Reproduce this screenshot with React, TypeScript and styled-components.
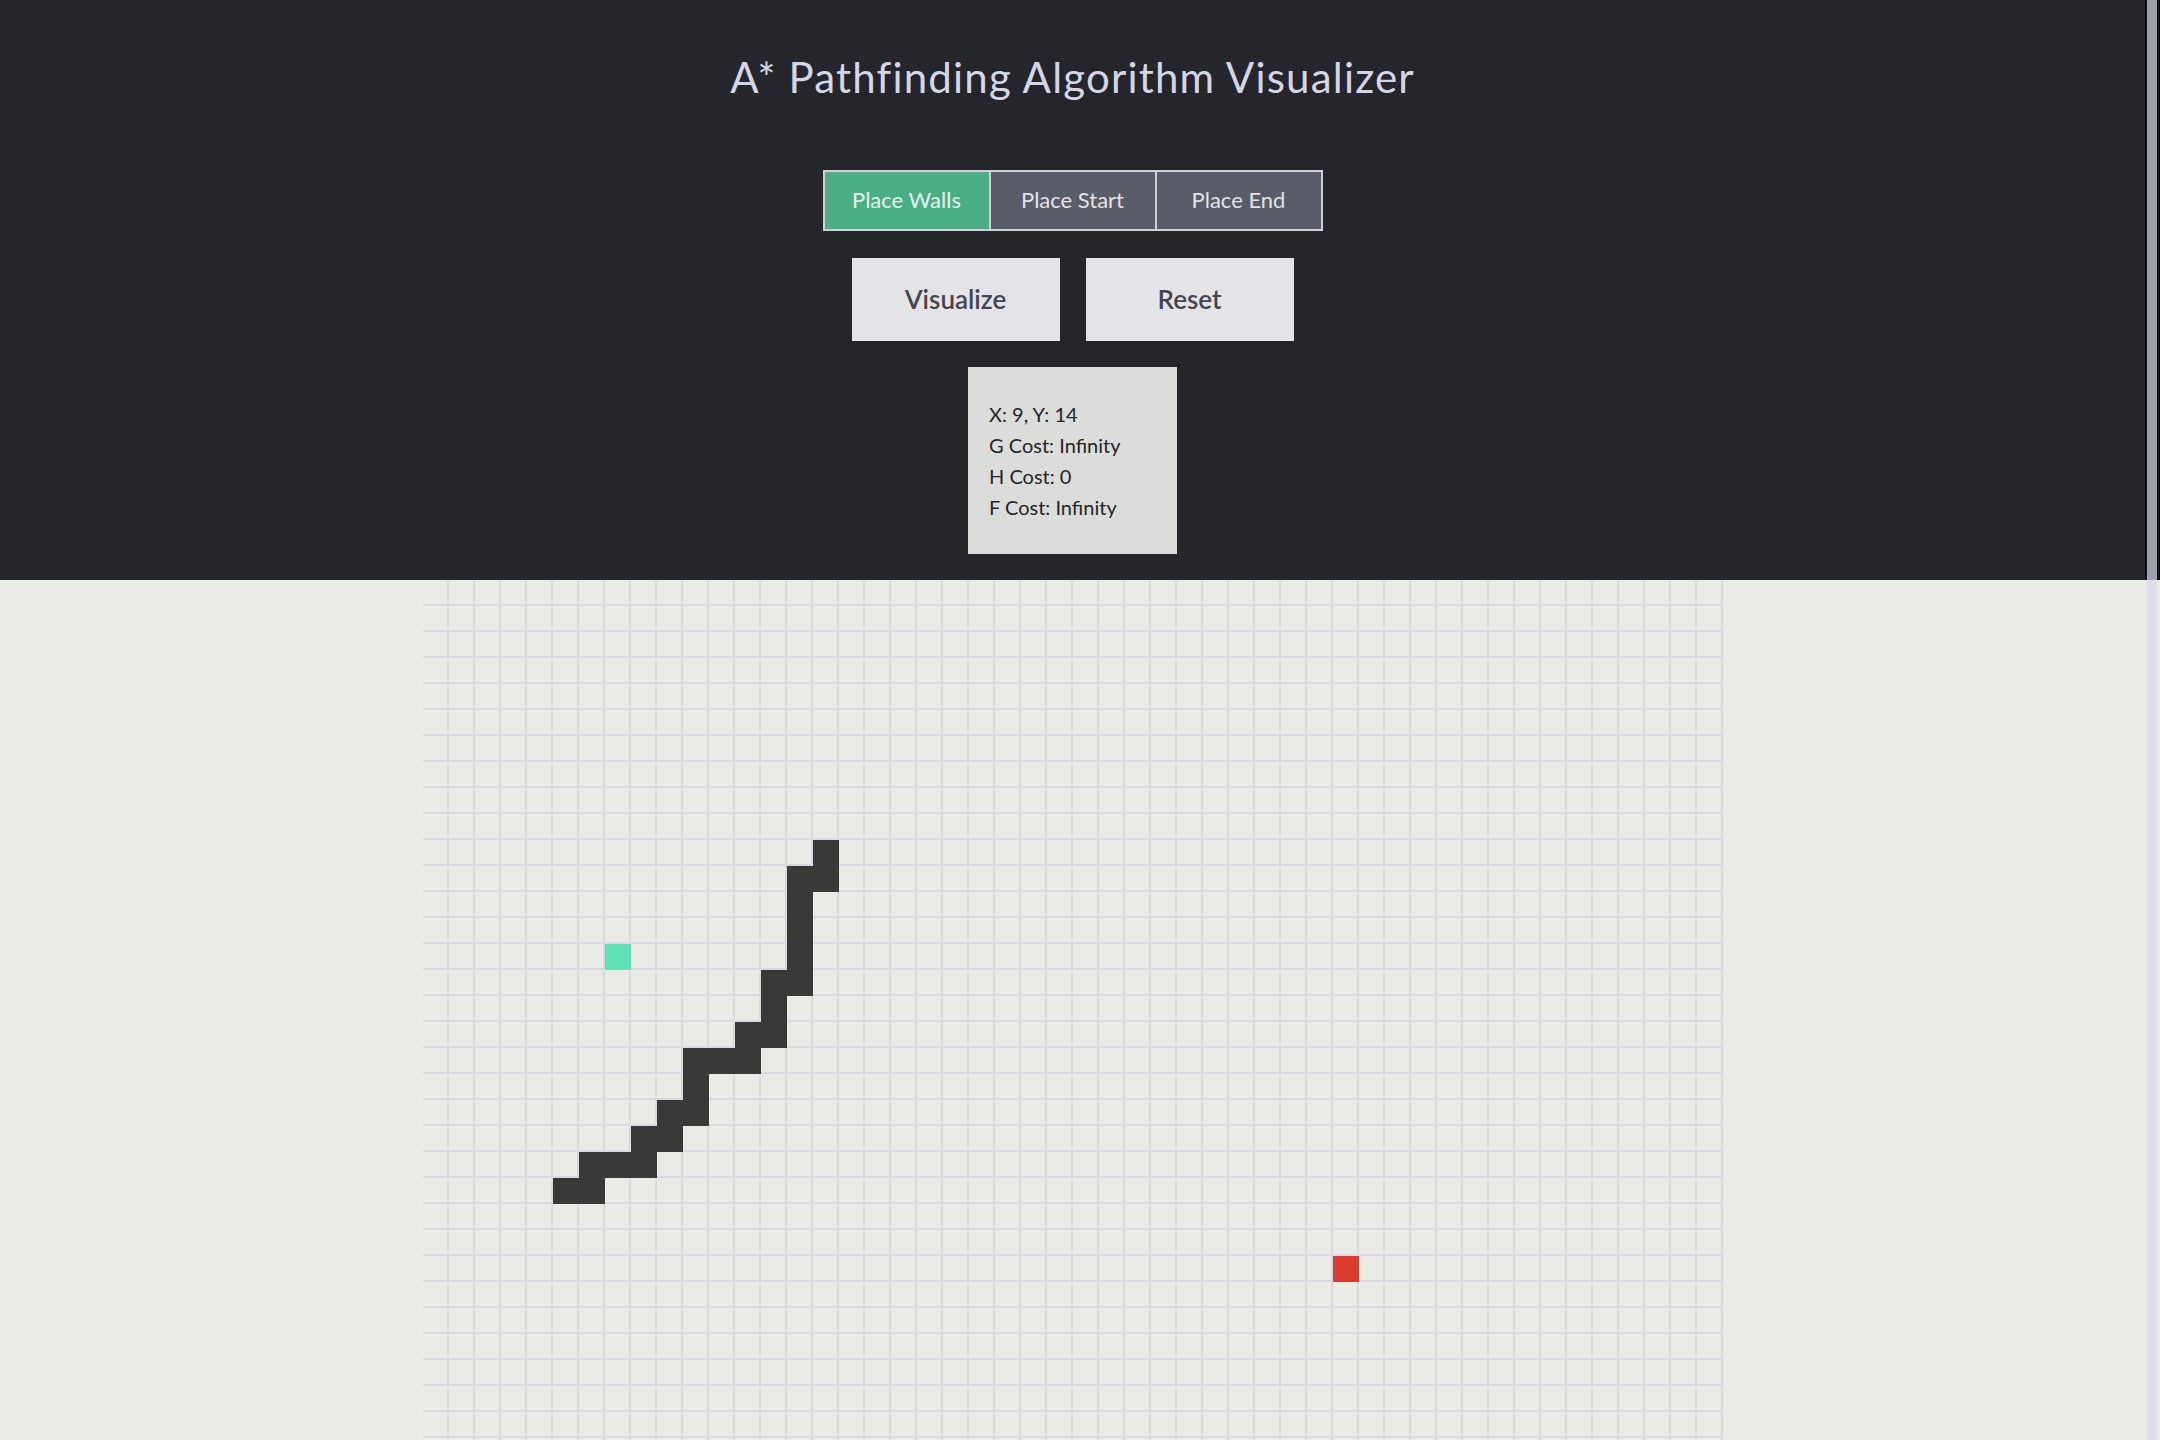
import React from "react";
import styled, { createGlobalStyle } from "styled-components";

const COLS = 50;
const ROWS = 34;
const CELL = 26;
const HEADER_H = 580;

const GlobalStyle = createGlobalStyle`
  html, body {
    margin: 0;
    background: #ebebe6;
    font-family: Lato, "Noto Sans", sans-serif;
  }
`;

const Page = styled.div`
  display: flex;
  align-items: flex-start;
  min-height: 100vh;
`;

const Content = styled.div`
  flex: 1;
  min-width: 0;
  display: flex;
  flex-direction: column;
`;

const ScrollTrack = styled.div`
  position: sticky;
  top: 0;
  flex: 0 0 15px;
  height: 100vh;
  display: flex;
  justify-content: flex-start;
  padding-left: 2px;
  box-sizing: border-box;
  background: linear-gradient(
    to bottom,
    #0d0e10 0,
    #0d0e10 ${HEADER_H}px,
    #ebebe6 ${HEADER_H}px,
    #ebebe6 100%
  );
`;

const ScrollThumb = styled.div`
  width: 10px;
  height: 100%;
  background: linear-gradient(
    to bottom,
    #9da1ae 0,
    #9da1ae ${HEADER_H}px,
    #dfe0e7 ${HEADER_H}px,
    #dfe0e7 100%
  );
`;

const Header = styled.header`
  background: #24262c;
  display: flex;
  flex-direction: column;
  align-items: center;
  padding: 52px 0 26px;
`;

const Title = styled.h1`
  margin: 0;
  font-family: Lato, "Noto Sans", sans-serif;
  font-weight: 400;
  font-size: 42px;
  line-height: 50px;
  letter-spacing: 1.2px;
  color: #d5d7e6;
`;

const ModeGroup = styled.div`
  display: flex;
  margin-top: 68px;
`;

const ModeButton = styled.button<{ $active?: boolean }>`
  width: 168px;
  height: 61px;
  box-sizing: border-box;
  border: 2px solid #cfd0d2;
  margin: 0;
  padding: 0 0 2px;
  background: ${(p) => (p.$active ? "#4aaf84" : "#595d67")};
  color: ${(p) => (p.$active ? "#e6f4ee" : "#e2e3e8")};
  font-family: Lato, "Noto Sans", sans-serif;
  font-size: 22px;
  font-weight: 400;
  cursor: pointer;
  & + & {
    margin-left: -2px;
  }
`;

const ActionRow = styled.div`
  display: flex;
  gap: 26px;
  margin-top: 27px;
`;

const ActionButton = styled.button`
  width: 208px;
  height: 83px;
  border: none;
  margin: 0;
  padding: 0 0 2px;
  background: #e4e4e8;
  color: #45454d;
  font-family: Lato, "Noto Sans", sans-serif;
  font-size: 26px;
  font-weight: 600;
  cursor: pointer;
`;

const InfoBox = styled.div`
  margin-top: 26px;
  width: 209px;
  height: 187px;
  box-sizing: border-box;
  background: #dcdcda;
  padding: 32px 20px 0 21px;
  display: flex;
  flex-direction: column;
`;

const InfoLine = styled.div`
  font-family: Lato, "Noto Sans", sans-serif;
  font-size: 20px;
  line-height: 31px;
  color: #25252a;
  white-space: nowrap;
`;

const Board = styled.main`
  display: flex;
  justify-content: center;
  background: #ebebe6;
`;

const Grid = styled.div`
  display: grid;
  grid-template-columns: repeat(${COLS}, ${CELL}px);
  grid-auto-rows: ${CELL}px;
`;

type Kind = "empty" | "wall" | "start" | "end";

const kindColor: Record<Kind, string> = {
  empty: "transparent",
  wall: "#393937",
  start: "#5fe3b6",
  end: "#d93b30",
};

const Cell = styled.div<{ $kind: Kind }>`
  box-sizing: border-box;
  width: ${CELL}px;
  height: ${CELL}px;
  background: ${(p) => kindColor[p.$kind]};
  border-right: 2px solid ${(p) => (p.$kind === "empty" ? "#d9d9e3" : kindColor[p.$kind])};
  border-bottom: 2px solid ${(p) => (p.$kind === "empty" ? "#d9d9e3" : kindColor[p.$kind])};
`;

const wallSpec: Array<[number, number[]]> = [
  [15, [10, 11]],
  [14, [11, 12, 13, 14, 15]],
  [13, [15, 16, 17]],
  [12, [17, 18]],
  [11, [18]],
  [10, [18, 19, 20]],
  [9, [20, 21]],
  [8, [21, 22]],
  [7, [22]],
  [6, [22, 23]],
  [5, [23]],
];

const walls = new Set<string>();
wallSpec.forEach(([c, rows]) => rows.forEach((r) => walls.add(`${c},${r}`)));

const START = "7,14";
const END = "35,26";

function kindAt(c: number, r: number): Kind {
  const k = `${c},${r}`;
  if (k === START) return "start";
  if (k === END) return "end";
  if (walls.has(k)) return "wall";
  return "empty";
}

export default function App() {
  const cells: React.ReactNode[] = [];
  for (let r = 0; r < ROWS; r++) {
    for (let c = 0; c < COLS; c++) {
      cells.push(<Cell key={`${c}-${r}`} $kind={kindAt(c, r)} />);
    }
  }
  return (
    <>
      <GlobalStyle />
      <Page>
        <Content>
          <Header>
            <Title>A* Pathfinding Algorithm Visualizer</Title>
            <ModeGroup>
              <ModeButton $active>Place Walls</ModeButton>
              <ModeButton>Place Start</ModeButton>
              <ModeButton>Place End</ModeButton>
            </ModeGroup>
            <ActionRow>
              <ActionButton>Visualize</ActionButton>
              <ActionButton>Reset</ActionButton>
            </ActionRow>
            <InfoBox>
              <InfoLine>X: 9, Y: 14</InfoLine>
              <InfoLine>G Cost: Infinity</InfoLine>
              <InfoLine>H Cost: 0</InfoLine>
              <InfoLine>F Cost: Infinity</InfoLine>
            </InfoBox>
          </Header>
          <Board>
            <Grid>{cells}</Grid>
          </Board>
        </Content>
        <ScrollTrack>
          <ScrollThumb />
        </ScrollTrack>
      </Page>
    </>
  );
}
